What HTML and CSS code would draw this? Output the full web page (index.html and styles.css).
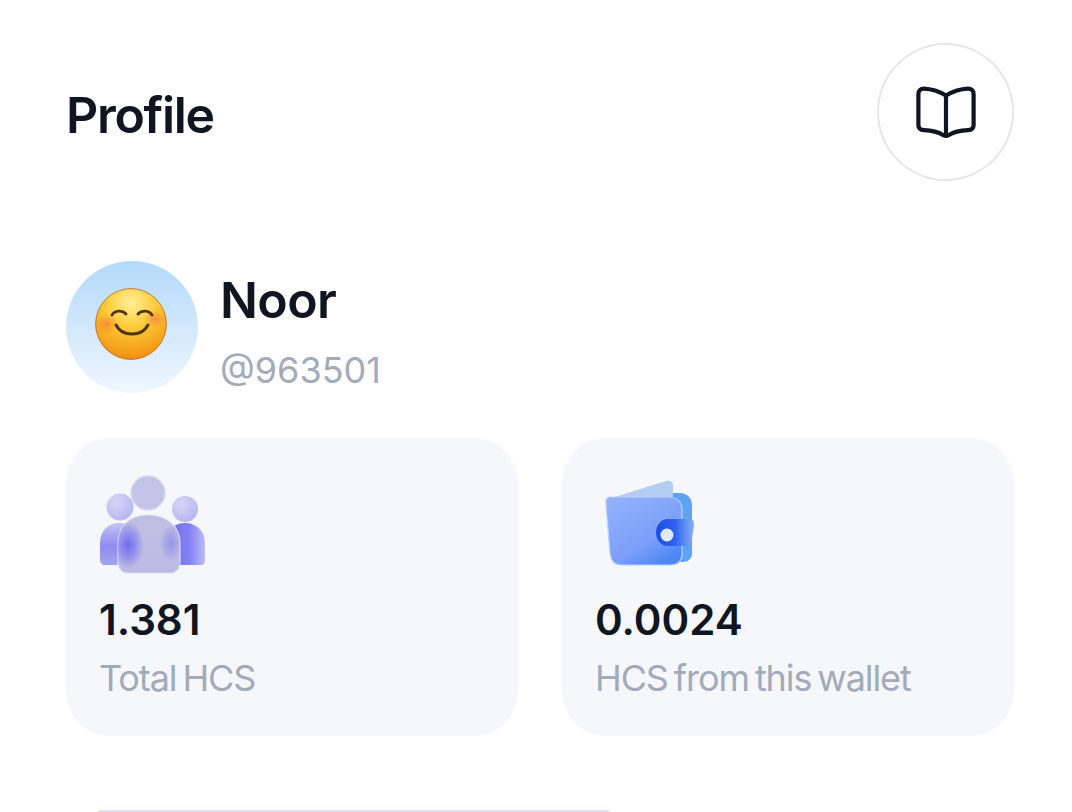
FILE: index.html
```html
<!DOCTYPE html>
<html lang="en">
<head>
<meta charset="utf-8">
<title>Profile</title>
<link rel="stylesheet" href="styles.css">
</head>
<body>
<main class="page">
  <header class="header">
    <h1 class="title">Profile</h1>
    <button class="guide" aria-label="Guide">
      <svg class="book" viewBox="0 0 60 52" fill="none" stroke="#10151f" stroke-width="4.2" stroke-linecap="round" stroke-linejoin="round">
        <path d="M30 9.5 C25 6.5 18 3 8 2.6 C4.6 2.5 2.4 4.8 2.4 8 V39 C2.4 42 4.5 44 8 44.2 C17 44.6 23 46.5 27 49 C29 50.2 31 50.2 33 49 C37 46.5 43 44.6 52 44.2 C55.5 44 57.6 42 57.6 39 V8 C57.6 4.8 55.4 2.5 52 2.6 C42 3 35 6.5 30 9.5 Z"/>
        <path d="M30 9.5 V49.5"/>
      </svg>
    </button>
  </header>

  <section class="user">
    <div class="avatar">
      <svg class="emoji" viewBox="0 0 72 72">
        <defs>
          <radialGradient id="face" cx="50%" cy="20%" r="84%">
            <stop offset="0" stop-color="#fff09a"/>
            <stop offset="0.42" stop-color="#fdcb38"/>
            <stop offset="0.85" stop-color="#f59c18"/>
            <stop offset="1" stop-color="#e9830f"/>
          </radialGradient>
          <radialGradient id="blush">
            <stop offset="0" stop-color="#f4703c" stop-opacity=".6"/>
            <stop offset="1" stop-color="#f4703c" stop-opacity="0"/>
          </radialGradient>
        </defs>
        <circle cx="36" cy="36" r="35.4" fill="url(#face)" stroke="#b9651a" stroke-width=".8"/>
        <ellipse cx="12" cy="36" rx="12" ry="10" fill="url(#blush)"/>
        <ellipse cx="60" cy="31" rx="11" ry="9" fill="url(#blush)"/>
        <g fill="none" stroke="#52340f" stroke-width="2.9" stroke-linecap="round">
          <path d="M17 27 C20 22 27 22 31 26"/>
          <path d="M43 26 C47 22 54 22 57 27"/>
          <path d="M21 37 C27 49 47 49 53 37"/>
        </g>
      </svg>
    </div>
    <div class="identity">
      <div class="name">Noor</div>
      <div class="handle">@963501</div>
    </div>
  </section>

  <section class="stats">
    <article class="card">
      <svg class="card-icon people" viewBox="0 0 108 100">
        <defs>
          <linearGradient id="sideLeft" x1="0" y1="0" x2="0" y2="1">
            <stop offset="0" stop-color="#c4c4f5"/>
            <stop offset=".55" stop-color="#8f8cf2"/>
            <stop offset="1" stop-color="#a5a4ee"/>
          </linearGradient>
          <linearGradient id="sideRight" x1="0" y1="0" x2="1" y2="0">
            <stop offset="0" stop-color="#6f6bf0"/>
            <stop offset=".6" stop-color="#8582f2"/>
            <stop offset="1" stop-color="#bcbcf6"/>
          </linearGradient>
          <linearGradient id="mid" x1="0" y1="0" x2="0" y2="1">
            <stop offset="0" stop-color="#c0bfe3"/>
            <stop offset="1" stop-color="#bcbbe4"/>
          </linearGradient>
          <radialGradient id="glow">
            <stop offset="0" stop-color="#6f6bf4"/>
            <stop offset=".55" stop-color="#7773f3" stop-opacity=".55"/>
            <stop offset="1" stop-color="#7773f3" stop-opacity="0"/>
          </radialGradient>
          <radialGradient id="head" cx="35%" cy="30%" r="75%">
            <stop offset="0" stop-color="#d6d6f8"/>
            <stop offset="1" stop-color="#b6b6f2"/>
          </radialGradient>
          <clipPath id="midClip">
            <path d="M19 86 V68 C19 51 31 40 49 40 C67 40 81 51 81 68 V86 C81 94 77 98 71 98 H29 C23 98 19 94 19 86 Z"/>
          </clipPath>
          <filter id="soft" x="-5%" y="-5%" width="110%" height="110%">
            <feGaussianBlur stdDeviation=".5"/>
          </filter>
        </defs>
        <g filter="url(#soft)">
          <circle cx="21" cy="32" r="13.5" fill="url(#head)"/>
          <circle cx="86" cy="34" r="13" fill="url(#head)"/>
          <path d="M1 84 V68 C1 56 9 48 20 48 C31 48 40 56 40 68 V90 H6 C3 90 1 88 1 84 Z" fill="url(#sideLeft)"/>
          <path d="M68 90 V66 C68 55 75 48 86 48 C97 48 106 56 106 68 V86 C106 88 105 90 102 90 Z" fill="url(#sideRight)"/>
          <circle cx="49" cy="18" r="17" fill="#c4c3e8" stroke="#d8d8f2" stroke-width="1.4"/>
          <path d="M19 86 V68 C19 51 31 40 49 40 C67 40 81 51 81 68 V86 C81 94 77 98 71 98 H29 C23 98 19 94 19 86 Z" fill="url(#mid)" stroke="#dcdcf4" stroke-width="1.2"/>
          <g clip-path="url(#midClip)">
            <ellipse cx="29" cy="70" rx="16" ry="24" fill="url(#glow)"/>
            <ellipse cx="72" cy="68" rx="11" ry="18" fill="url(#glow)" opacity=".5"/>
          </g>
        </g>
      </svg>
      <div class="value">1.381</div>
      <div class="label">Total HCS</div>
    </article>
    <article class="card">
      <svg class="card-icon wallet" viewBox="0 0 92 90">
        <defs>
          <linearGradient id="body" x1="0" y1="0" x2=".7" y2="1">
            <stop offset="0" stop-color="#94b4fb"/>
            <stop offset=".7" stop-color="#7c9ffa"/>
            <stop offset="1" stop-color="#4f87f6"/>
          </linearGradient>
          <linearGradient id="strap" x1="0" y1="0" x2="1" y2="0">
            <stop offset="0" stop-color="#1c4ee6"/>
            <stop offset=".5" stop-color="#2f62ee"/>
            <stop offset="1" stop-color="#88affb"/>
          </linearGradient>
          <filter id="softWallet" x="-5%" y="-5%" width="110%" height="110%">
            <feGaussianBlur stdDeviation=".45"/>
          </filter>
        </defs>
        <g filter="url(#softWallet)">
          <path d="M60 14 H76 C83 14 88 19 88 27 V74 C88 80 84 83 78 83 H60 Z" fill="#5da2f3"/>
          <path d="M11 18 L62 2 C66 1 69 3 69 6 V22 H11 Z" fill="#b3cdf3"/>
          <path d="M6 18 H64 C73 18 78 23 78 31 V75 C78 82 74 86 66 86 H17 C10 86 7 82 6 75 L2 25 C1.6 20 3 18 6 18 Z" fill="url(#body)" stroke="#bed1fb" stroke-width="1.2"/>
          <path d="M64 40 H86 C89 40 90 43 90 46 L88 60 C87 65 85 67 80 67 H64 C57 67 52 61 52 53.5 C52 46 57 40 64 40 Z" fill="url(#strap)"/>
          <circle cx="63" cy="56" r="6.5" fill="#e0e9fb"/>
        </g>
      </svg>
      <div class="value">0.0024</div>
      <div class="label">HCS from this wallet</div>
    </article>
  </section>

  <div class="next-card"></div>
</main>
</body>
</html>
```

FILE: styles.css
```css
* {
  box-sizing: border-box;
}

html,
body {
  margin: 0;
  height: 100%;
  background: #fff;
}

body {
  overflow: hidden;
  font-family: Inter, "Liberation Sans", sans-serif;
  color: #10151f;
}

.page {
  display: flex;
  flex-direction: column;
  width: 1072px;
  height: 812px;
  padding: 43px 58px 0 66px;
  overflow: hidden;
}

.header {
  display: flex;
  align-items: center;
  justify-content: space-between;
  height: 138px;
}

.title {
  margin: 6px 0 0;
  font-size: 50px;
  font-weight: 600;
  letter-spacing: -1.3px;
  line-height: 1;
}

.guide {
  display: flex;
  align-items: center;
  justify-content: center;
  width: 137px;
  height: 138px;
  padding: 0;
  background: #fff;
  border: 2px solid #e4e6ea;
  border-radius: 50%;
}

.book {
  width: 60px;
  height: 52px;
}

.user {
  display: flex;
  align-items: center;
  gap: 22px;
  margin-top: 80px;
}

.avatar {
  display: flex;
  align-items: center;
  justify-content: center;
  width: 132px;
  height: 132px;
  padding: 0 2px 6px 0;
  border-radius: 50%;
  background: linear-gradient(180deg, #b3d9fb 0%, #f0f7fe 100%);
}

.emoji {
  width: 72px;
  height: 72px;
}

.identity {
  display: flex;
  flex-direction: column;
  gap: 21px;
  padding-top: 6px;
}

.name {
  font-size: 50px;
  font-weight: 600;
  letter-spacing: -.6px;
  line-height: 58px;
}

.handle {
  font-size: 36px;
  font-weight: 400;
  line-height: 40px;
  color: #a3aab8;
}

.stats {
  display: grid;
  grid-template-columns: 452px 452px;
  gap: 44px;
  margin-top: 45px;
}

.card {
  display: flex;
  flex-direction: column;
  height: 298px;
  padding: 37px 32px 0 33px;
  border-radius: 44px;
  background: #f5f7fb;
}

.card-icon {
  display: block;
}

.people {
  width: 108px;
  height: 100px;
}

.wallet {
  width: 92px;
  height: 90px;
  margin: 4px 0 6px 9px;
}

.value {
  margin-top: 20px;
  font-size: 42px;
  font-weight: 600;
  line-height: 50px;
}

.label {
  margin-top: 12px;
  font-size: 36px;
  font-weight: 400;
  letter-spacing: -1.1px;
  word-spacing: -3px;
  line-height: 42px;
  color: #a3aab8;
}

.next-card {
  height: 20px;
  margin: 74px 404px 0 32px;
  border-radius: 24px 24px 0 0;
  background: #e4e1f7;
  box-shadow: 0 -2px 4px #f1effc;
}
```
